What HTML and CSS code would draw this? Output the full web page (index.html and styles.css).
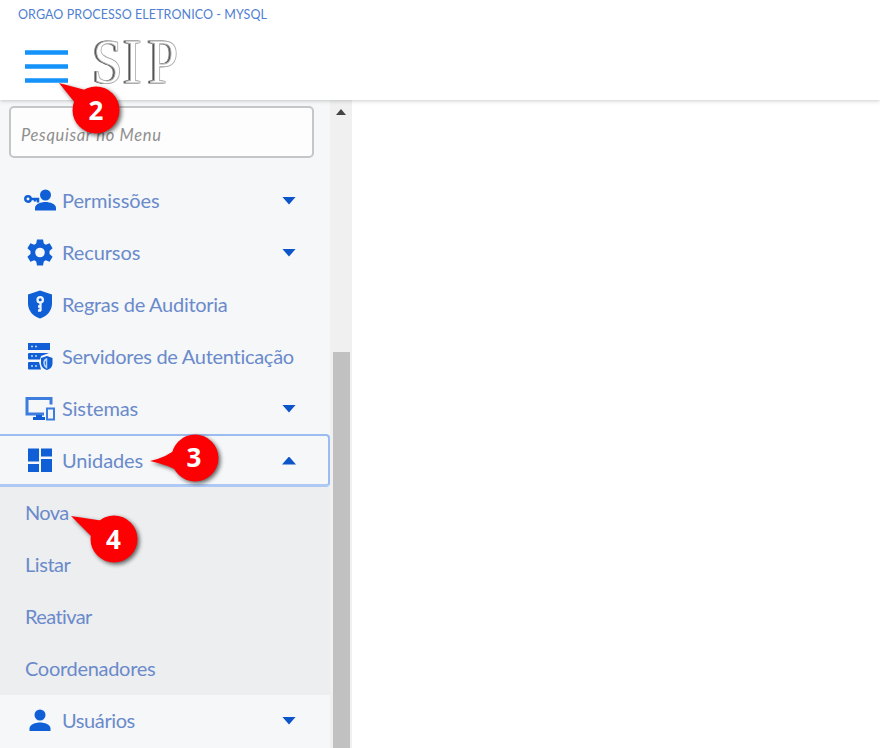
FILE: index.html
```
<!DOCTYPE html>
<html lang="pt-BR">
<head>
<meta charset="utf-8">
<title>SIP</title>
<link rel="stylesheet" href="styles.css">
</head>
<body>
<header class="topbar">
  <div class="org">ORGAO PROCESSO ELETRONICO - MYSQL</div>
  <div class="brand">
    <div class="burger"><i></i><i></i><i></i></div>
    <svg class="logo" width="110" height="70" viewBox="0 0 110 70">
      <text transform="translate(5 53) scale(.84 1)" x="0 37 66" y="0">SIP</text>
    </svg>
  </div>
</header>
<div class="page">
  <aside class="sidebar">
    <div class="search">Pesquisar no Menu</div>
    <nav>
      <div class="row"><span class="icon"><svg width="34" height="28" viewBox="0 0 34 28"><circle cx="22.500" cy="8" r="5.500"/><path d="M12 23.500v-2.500c0-4 6-6 10.500-6s10.500 2 10.500 6v2.500z"/><path class="line" d="M7.500 12H15V15.500M12 12V14.500"/><circle class="line" cx="5" cy="12" r="2.700"/></svg></span><span class="label l1">Permissões</span><b class="down"></b></div>
      <div class="row"><span class="icon"><svg width="34" height="28" viewBox="0 0 34 28"><path fill-rule="evenodd" d="M14 .5h6l.8 4 2 1.200 3.800-1.400 3 5-3.100 2.700v3l3.100 2.700-3 5-3.800-1.400-2 1.200-.8 4h-6l-.8-4-2-1.200-3.800 1.400-3-5 3.100-2.700v-3L4.400 9.300l3-5 3.800 1.400 2-1.200zM17 8.700a4.800 4.800 0 1 0 0 9.600 4.800 4.800 0 0 0 0-9.600z"/></svg></span><span class="label l2">Recursos</span><b class="down"></b></div>
      <div class="row"><span class="icon"><svg width="34" height="30" viewBox="0 0 34 30"><path d="M17 .5l12 4v9c0 7-5 13-12 15C10 26.500 5 20.500 5 13.500v-9z"/><circle class="white-line" cx="17.200" cy="9.800" r="2.700"/><path class="white-line" d="M17.500 12.500v8.500M15 20.500h3M15 16.500h2.500"/></svg></span><span class="label l3">Regras de Auditoria</span></div>
      <div class="row"><span class="icon"><svg width="34" height="30" viewBox="0 0 34 30"><path d="M5 1h22v7H5zM6 11h20l-8 3-1 3.500H6q-1 0-1-1V12q0-1 1-1zM6 20h10l2 7.500H6q-1 0-1-1V21q0-1 1-1z"/><path d="M24 14l5.500 2v5c0 4-2.500 6-5.500 7-3.500-1-6-3.500-6-7v-5z"/><path class="thin" d="M8 4.500h2M12 4.500h2M8 14h2M12 14h2M8 24h2M12 24h2M23.500 17q-2.500 1-2.500 4t2.500 4.500z"/></svg></span><span class="label l4">Servidores de Autenticação</span></div>
      <div class="row"><span class="icon"><svg width="34" height="28" viewBox="0 0 34 28"><path class="frame" d="M28 9.500V3.500H4V19h17"/><path d="M13 20h6v2h3v3H10v-3h3z"/><rect class="device" x="24" y="13.500" width="7" height="11"/></svg></span><span class="label l5">Sistemas</span><b class="down"></b></div>
      <div class="row selected"><span class="icon"><svg width="34" height="28" viewBox="0 0 34 28"><path d="M5 2.500h11v13H5zM18 2.500h11v8H18zM5 18h11v8H5zM18 13h11v13H18z"/></svg></span><span class="label l6">Unidades</span><b class="up"></b></div>
      <div class="sub">
        <div class="row"><span class="label s1">Nova</span></div>
        <div class="row"><span class="label s2">Listar</span></div>
        <div class="row"><span class="label s3">Reativar</span></div>
        <div class="row"><span class="label s4">Coordenadores</span></div>
      </div>
      <div class="row"><span class="icon"><svg width="34" height="28" viewBox="0 0 34 28"><circle cx="17" cy="8" r="5.500"/><path d="M6.500 24v-2.500c0-4 6-6 10.500-6s10.500 2 10.500 6V24z"/></svg></span><span class="label l7">Usuários</span><b class="down"></b></div>
    </nav>
  </aside>
  <div class="scroll"><div class="arrow"></div><div class="thumb"></div></div>
  <main></main>
</div>
<svg class="callouts" width="260" height="580" viewBox="0 0 260 580">
  <g class="pin"><path d="M59 83L89 91 76 104z"/><circle cx="96" cy="110" r="23.500"/></g>
  <g class="pin"><path d="M150 461Q168 457 178 447V471Q168 465 150 461z"/><circle cx="195" cy="458" r="23.500"/></g>
  <g class="pin"><path d="M71 516L104 521 93 538z"/><circle cx="114" cy="539" r="23.500"/></g>
  <g class="digit"><text x="96" y="120">2</text><text x="194" y="467">3</text><text x="113.500" y="549">4</text></g>
</svg>
</body>
</html>
```
FILE: styles.css
```
* { box-sizing: border-box; }
body { margin: 0; width: 880px; height: 748px; overflow: hidden; background: #fff; font-family: Lato, "Liberation Sans", sans-serif; font-variant-ligatures: none; }
.topbar { height: 100px; padding-left: 18px; background: #fff; position: relative; box-shadow: 0 1px 4px rgba(0,0,0,.2); }
.org { height: 30px; line-height: 30px; font-size: 12.5px; letter-spacing: .08px; color: #4f80d2; white-space: nowrap; }
.brand { display: flex; height: 70px; padding-left: 7px; }
.burger { display: flex; flex-direction: column; gap: 9px; width: 43px; padding-top: 20px; }
.burger i { height: 5px; background: #1593fa; border: solid #4badf9; border-width: 1px 0; }
.logo { margin-left: 20px; }
.logo text { font-family: "Liberation Serif", serif; font-size: 64px; fill: #fff; stroke: #b0b0b0; stroke-width: 1px; filter: drop-shadow(-2px 0 0 #505050); }
.page { display: flex; height: 648px; }
.sidebar { width: 330px; background: #f5f7f8; padding-top: 6px; }
.search { height: 52px; width: 305px; margin-left: 9px; padding-left: 10px; border: 2px solid #c4c7ca; border-radius: 5px; background: #fdfdfd; line-height: 54px; font-size: 16.5px; font-style: italic; color: #8f8f8f; letter-spacing: .68px; }
nav { padding-top: 17px; }
.row { height: 52px; display: flex; align-items: center; padding: 0 34px 0 23px; }
.icon { flex: none; width: 39px; display: flex; }
.icon svg { fill: #105fd6; }
.icon .line { fill: none; stroke: #105fd6; stroke-width: 2.5px; }
.icon .frame { fill: none; stroke: #3c7ddd; stroke-width: 3px; }
.icon .device { fill: #f5f7f8; stroke: #3c7ddd; stroke-width: 2px; }
.icon .white-line { fill: none; stroke: #eef4fc; stroke-width: 2.3px; }
.icon .thin { fill: none; stroke: #bdd3f3; stroke-width: 1.5px; }
.label { flex: 1; min-width: 0; font-size: 20px; line-height: 24px; margin-top: -2px; color: #6a8acb; white-space: nowrap; }
.l1, .l2 { letter-spacing: -.1px; }
.l3 { letter-spacing: -.28px; }
.l4 { letter-spacing: -.28px; }
.l5, .l6 { letter-spacing: -.1px; }
.l7 { letter-spacing: -.4px; }
.s1 { letter-spacing: -.6px; }
.s2 { letter-spacing: -.45px; }
.s3 { letter-spacing: -.6px; }
.s4 { letter-spacing: -.3px; }
.down, .up { width: 14px; height: 8px; margin-top: -1px; background: #0c55c9; clip-path: polygon(0 0, 100% 0, 50% 100%); }
.up { margin-top: 1px; clip-path: polygon(50% 0, 100% 100%, 0 100%); }
.selected { border: 2px solid #9bbcf1; border-left: 0; border-bottom: 3px solid #aec9f4; border-radius: 0 4px 4px 0; padding-right: 32px; height: 53px; margin-top: -1px; }
.selected .label { margin-top: 0; }
.sub { background: #edeeef; }
.sub .row { padding-left: 25px; }
.scroll { width: 22px; background: #f0f0f0; padding-top: 9px; }
.arrow { width: 10px; height: 6px; margin-left: 6px; background: #444; clip-path: polygon(50% 0, 100% 100%, 0 100%); }
.thumb { width: 17px; height: 396px; margin: 237px 0 0 3px; background: #c1c1c1; }
main { flex: 1; background: #fff; }
.callouts { position: absolute; left: 0; top: 0; }
.pin { fill: #fc0004; filter: drop-shadow(2px 2px 2px rgba(0,0,0,.6)); }
.digit { fill: #fff; font-family: "Open Sans", sans-serif; font-size: 26px; font-weight: 700; text-anchor: middle; }
```
